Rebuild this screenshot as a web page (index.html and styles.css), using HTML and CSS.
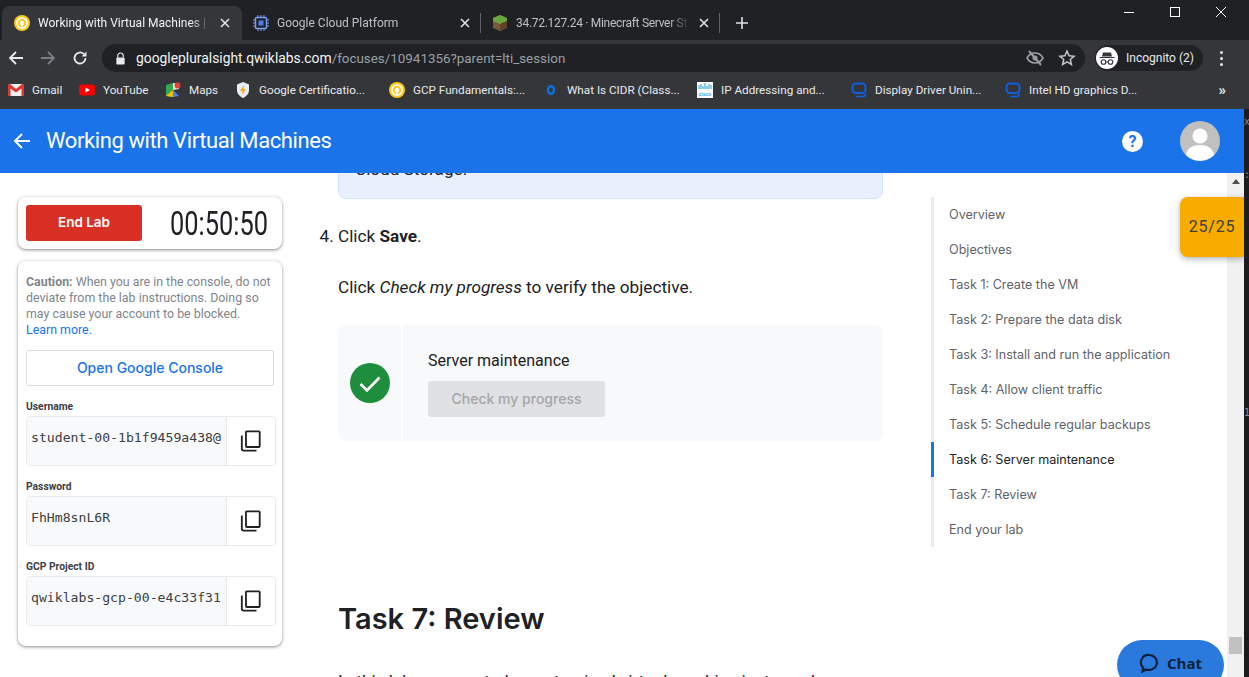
FILE: index.html
```html
<!DOCTYPE html>
<html lang="en">

<head>
  <meta charset="UTF-8">
  <meta name="viewport" content="width=device-width, initial-scale=1.0">
  <title>Working with Virtual Machines</title>
  <link rel="stylesheet" href="styles.css">
</head>

<body>
  <svg class="defs" width="0" height="0" aria-hidden="true">
    <symbol id="i-qwik" viewBox="0 0 16 16">
      <circle cx="8" cy="8" r="8" fill="#fbc91f" />
      <circle cx="8" cy="8" r="5.100" fill="none" stroke="#fff" stroke-width="1.500" />
      <circle cx="8" cy="8" r="2.200" fill="#fff" />
      <rect x="7.200" y="8" width="1.600" height="6" fill="#fff" />
    </symbol>
    <symbol id="i-close" viewBox="0 0 10 10">
      <path d="M1 1l8 8M9 1l-8 8" stroke="currentColor" stroke-width="1.6" fill="none" />
    </symbol>
    <symbol id="i-display" viewBox="0 0 16 16">
      <rect x="1.500" y="1.500" width="13" height="9.500" rx="3.500" fill="none" stroke="#0f5fe0" stroke-width="2" />
      <path d="M5 14.500h6.500c1.500 0 3-1.200 3-3" fill="none" stroke="#0f5fe0" stroke-width="1.700" />
    </symbol>
    <symbol id="i-copy" viewBox="0 0 24 24">
      <rect x="6.500" y="1.500" width="15" height="17" rx="1" fill="none" stroke="#202124" stroke-width="2" />
      <path d="M2 6v14.500a2 2 0 0 0 2 2h14" fill="none" stroke="#202124" stroke-width="2" />
    </symbol>
  </svg>

  <div class="page">
    <div class="tabstrip">
      <div class="tab tab-active">
        <svg class="fav"><use href="#i-qwik" /></svg>
        <span class="tab-title">Working with Virtual Machines | Q</span>
        <svg class="tab-x"><use href="#i-close" /></svg>
      </div>
      <div class="tab">
        <svg class="fav" viewBox="0 0 16 16">
          <rect x="2.500" y="2.500" width="11" height="11" rx="1" fill="#202124" stroke="#7c9cf2" stroke-width="1.500" />
          <rect x="5.500" y="5.500" width="5" height="5" fill="#4b7cf0" />
          <path d="M5 0v2.500M8 0v2.500M11 0v2.500M5 13.500V16M8 13.500V16M11 13.500V16M0 5h2.500M0 8h2.500M0 11h2.500M13.500 5H16M13.500 8H16M13.500 11H16" stroke="#7c9cf2" />
        </svg>
        <span class="tab-title">Google Cloud Platform</span>
        <svg class="tab-x"><use href="#i-close" /></svg>
      </div>
      <div class="tab-sep"></div>
      <div class="tab">
        <svg class="fav" viewBox="0 0 16 16">
          <path d="M8 0l7 3v10l-7 3-7-3V3z" fill="#7b5a3a" />
          <path d="M8 0l7 3v3l-7 3-7-3V3z" fill="#6aa83f" />
          <path d="M8 9v7l7-3V6z" fill="#5e4329" />
        </svg>
        <span class="tab-title tab-title-tight">34.72.127.24 · Minecraft Server St</span>
        <svg class="tab-x"><use href="#i-close" /></svg>
      </div>
      <div class="tab-sep"></div>
      <svg class="tab-plus" viewBox="0 0 12 12"><path d="M6 0v12M0 6h12" stroke="#dee1e6" stroke-width="1.600" /></svg>
      <div class="win-controls">
        <svg viewBox="0 0 12 12"><path d="M1 6.500h10" stroke="#fff" /></svg>
        <svg viewBox="0 0 12 12"><rect x="1.500" y="1.500" width="9" height="9" fill="none" stroke="#fff" /></svg>
        <svg viewBox="0 0 12 12"><path d="M1 1l10 10M11 1L1 11" stroke="#fff" /></svg>
      </div>
    </div>

    <div class="toolbar">
      <svg class="nav-ico" viewBox="0 0 16 16"><path d="M15 8H2M8 2L2 8l6 6" fill="none" stroke="#e8eaed" stroke-width="1.800" /></svg>
      <svg class="nav-ico" viewBox="0 0 16 16"><path d="M1 8h13M8 2l6 6-6 6" fill="none" stroke="#7b7e83" stroke-width="1.800" /></svg>
      <svg class="nav-ico" viewBox="0 0 16 16"><path d="M13.500 8a5.500 5.500 0 1 1-1.600-3.900" fill="none" stroke="#e8eaed" stroke-width="1.800" /><path d="M14.500 1.500v5h-5z" fill="#e8eaed" /></svg>
      <div class="omnibox">
        <svg class="lock" viewBox="0 0 12 14"><path d="M3 6V4a3 3 0 0 1 6 0v2" fill="none" stroke="#e8eaed" stroke-width="1.300" /><rect x="1.500" y="6" width="9" height="7.500" rx="1" fill="#e8eaed" /></svg>
        <span class="url"><b>googlepluralsight.qwiklabs.com</b>/focuses/10941356?parent=lti_session</span>
        <svg class="omni-ico" viewBox="0 0 18 18">
          <path d="M1 9c2-3.500 4.800-5 8-5s6 1.500 8 5c-2 3.500-4.800 5-8 5s-6-1.500-8-5z" fill="none" stroke="#9aa0a6" stroke-width="1.600" />
          <circle cx="9" cy="9" r="2.500" fill="#9aa0a6" />
          <path d="M3 2l12 14" stroke="#9aa0a6" stroke-width="2" />
        </svg>
        <svg class="omni-ico star" viewBox="0 0 18 18"><path d="M9 2l2.100 4.700 5 .5-3.800 3.300 1.100 5L9 12.900l-4.400 2.600 1.100-5L1.900 7.200l5-.5z" fill="none" stroke="#c4c7cb" stroke-width="1.500" /></svg>
      </div>
      <div class="profile">
        <svg class="incog" viewBox="0 0 22 22">
          <circle cx="11" cy="11" r="11" fill="#fff" />
          <path d="M7 5.500h8l1 4H6zM3.500 10h15v1h-15z" fill="#35363a" />
          <circle cx="7.500" cy="15" r="2.300" fill="none" stroke="#35363a" stroke-width="1.100" />
          <circle cx="14.500" cy="15" r="2.300" fill="none" stroke="#35363a" stroke-width="1.100" />
          <path d="M9.800 15h2.400" stroke="#35363a" />
        </svg>
        <span>Incognito (2)</span>
      </div>
      <div class="kebab"><i></i><i></i><i></i></div>
    </div>

    <div class="bookmarks">
      <a class="bm bm-gmail">
        <svg viewBox="0 0 16 16"><rect y="2" width="16" height="12" fill="#f1f1f1" /><path d="M0 2h2l6 5 6-5h2v12h-2.500V6.500L8 10.500 2.500 6.500V14H0z" fill="#d9392f" /></svg>
        Gmail
      </a>
      <a class="bm bm-youtube">
        <svg viewBox="0 0 16 16"><rect y="2.500" width="16" height="11" rx="3" fill="#f00" /><path d="M6.500 5.500l4.500 2.500-4.500 2.500z" fill="#fff" /></svg>
        YouTube
      </a>
      <a class="bm bm-maps">
        <svg viewBox="0 0 16 16"><path d="M1 3l7-2v14l-7-1z" fill="#34a853" /><path d="M8 8l6 6-6 1z" fill="#4285f4" /><path d="M1 14l7-6v7z" fill="#fbbc04" /><path d="M8 1l6 1v5L8 8z" fill="#e8eaed" /><circle cx="12.500" cy="3.500" r="3" fill="#ea4335" /></svg>
        Maps
      </a>
      <a class="bm">
        <svg viewBox="0 0 16 16"><path d="M8 0l6 2.500V8c0 4-3 6.500-6 8-3-1.500-6-4-6-8V2.500z" fill="#e8eef5" /><path d="M9 3L5 9h2.500L7 13l4-6H8.500z" fill="#f5a623" /></svg>
        Google Certificatio...
      </a>
      <a class="bm">
        <svg><use href="#i-qwik" /></svg>
        GCP Fundamentals:...
      </a>
      <a class="bm">
        <svg viewBox="0 0 16 16"><ellipse cx="8" cy="8" rx="3" ry="4" fill="none" stroke="#0a6fe0" stroke-width="2.500" /></svg>
        What Is CIDR (Class...
      </a>
      <a class="bm">
        <svg viewBox="0 0 16 16"><rect width="16" height="16" fill="#fff" /><path d="M2 3v4M4 2v5M6 4v3M8 1v6M10 4v3M12 2v5M14 3v4" stroke="#1ba0d7" /><text x="8" y="13.500" class="cisco-word">cisco</text></svg>
        IP Addressing and...
      </a>
      <a class="bm">
        <svg><use href="#i-display" /></svg>
        Display Driver Unin...
      </a>
      <a class="bm">
        <svg><use href="#i-display" /></svg>
        Intel HD graphics D...
      </a>
      <span class="bm-more">»</span>
    </div>

    <div class="window-row">
      <div class="site">
        <header class="lab-header">
          <svg class="back" viewBox="0 0 18 18"><path d="M17 9H2M9 2L2 9l7 7" fill="none" stroke="#fff" stroke-width="2" /></svg>
          <h1>Working with Virtual Machines</h1>
          <div class="help">?</div>
          <svg class="avatar" viewBox="0 0 40 40">
            <circle cx="20" cy="20" r="20" fill="#c0c0c0" />
            <circle cx="20" cy="15" r="7.500" fill="#fff" />
            <path d="M6 34c1-7 7-10 14-10s13 3 14 10a20 20 0 0 1-28 0z" fill="#fff" />
          </svg>
        </header>

        <main class="lab-body">
          <aside class="sidebar">
            <div class="card timer-card">
              <button class="end-lab">End Lab</button>
              <span class="timer">00:50:50</span>
            </div>
            <div class="card creds">
              <p class="caution"><b>Caution:</b> When you are in the console, do not deviate from the lab instructions. Doing so may cause your account to be blocked. <a>Learn more.</a></p>
              <button class="open-console">Open Google Console</button>
              <label class="cred-label">Username</label>
              <div class="cred-field">
                <span class="cred-value">student-00-1b1f9459a438@</span>
                <span class="cred-copy"><svg><use href="#i-copy" /></svg></span>
              </div>
              <label class="cred-label">Password</label>
              <div class="cred-field">
                <span class="cred-value">FhHm8snL6R</span>
                <span class="cred-copy"><svg><use href="#i-copy" /></svg></span>
              </div>
              <label class="cred-label">GCP Project ID</label>
              <div class="cred-field">
                <span class="cred-value">qwiklabs-gcp-00-e4c33f31</span>
                <span class="cred-copy"><svg><use href="#i-copy" /></svg></span>
              </div>
            </div>
          </aside>

          <article class="content">
            <div class="callout">Cloud Storage.</div>
            <ol class="steps" start="4">
              <li>Click <b>Save</b>.</li>
            </ol>
            <p class="verify">Click <em>Check my progress</em> to verify the objective.</p>
            <div class="progress-card">
              <div class="progress-state">
                <svg viewBox="0 0 40 40">
                  <circle cx="20" cy="20" r="20" fill="#1e8e3e" />
                  <path d="M10.500 21l6.500 6.500 12.500-13" fill="none" stroke="#fff" stroke-width="2.600" />
                </svg>
              </div>
              <div class="progress-main">
                <div class="progress-title">Server maintenance</div>
                <button class="check-btn">Check my progress</button>
              </div>
            </div>
            <h2>Task 7: Review</h2>
            <p class="review-text">In this lab, you created a customized virtual machine instance by</p>
          </article>

          <nav class="toc">
            <a>Overview</a>
            <a>Objectives</a>
            <a>Task 1: Create the VM</a>
            <a>Task 2: Prepare the data disk</a>
            <a>Task 3: Install and run the application</a>
            <a>Task 4: Allow client traffic</a>
            <a>Task 5: Schedule regular backups</a>
            <a class="toc-active">Task 6: Server maintenance</a>
            <a>Task 7: Review</a>
            <a>End your lab</a>
          </nav>

          <div class="scrollbar">
            <span class="scroll-up"></span>
            <span class="scroll-thumb"></span>
          </div>

          <div class="score">25/25</div>
          <div class="chat">
            <svg viewBox="0 0 20 20"><path d="M10 2a8 7.500 0 0 1 0 15c-1 0-2-.1-3-.5L3.500 18.500l.7-3.700A7.500 7.500 0 0 1 10 2z" fill="none" stroke="#0d2036" stroke-width="2.200" /></svg>
            Chat
          </div>
        </main>
      </div>

      <div class="next-window">
        <span class="frag-x">x</span>
        <span class="frag-colon">:</span>
        <span class="frag-one">1</span>
      </div>
    </div>
  </div>
</body>

</html>
```

FILE: styles.css
```css
* {
  margin: 0;
  padding: 0;
  box-sizing: border-box;
}

body {
  font-family: Roboto, sans-serif;
  background: #202124;
  overflow: hidden;
}

.defs {
  position: absolute;
}

.page {
  display: flex;
  flex-direction: column;
  width: 1249px;
  height: 677px;
  overflow: hidden;
}

/* browser chrome */
.tabstrip {
  display: flex;
  align-items: flex-end;
  height: 40px;
  padding-left: 2px;
  background: #202124;
}

.tab {
  display: flex;
  align-items: center;
  width: 238px;
  height: 34px;
  padding-left: 11px;
  padding-right: 10px;
  color: #bdc1c6;
  font-size: 12px;
}

.tab-active {
  width: 240px;
  padding-left: 12px;
  padding-right: 12px;
  border-radius: 8px 8px 0 0;
  background: #35363a;
  color: #f1f3f4;
}

.fav {
  flex: none;
  width: 16px;
  height: 16px;
  margin-right: 8px;
}

.tab-title {
  flex: 1;
  overflow: hidden;
  white-space: nowrap;
  -webkit-mask-image: linear-gradient(to right, #000 88%, transparent 100%);
  mask-image: linear-gradient(to right, #000 88%, transparent 100%);
}

.tab-title-tight {
  letter-spacing: -0.3px;
}

.tab-x {
  flex: none;
  width: 10px;
  height: 10px;
  margin-left: 9px;
  color: #dee1e6;
}

.tab-sep {
  width: 1px;
  height: 20px;
  margin-bottom: 7px;
  background: #5f6368;
}

.tab-plus {
  width: 12px;
  height: 12px;
  margin-left: 16px;
  margin-bottom: 11px;
}

.win-controls {
  display: flex;
  gap: 34px;
  align-self: flex-start;
  margin-left: auto;
  margin-right: 22px;
  padding-top: 6px;
}

.win-controls svg {
  width: 12px;
  height: 12px;
}

.toolbar {
  display: flex;
  align-items: center;
  height: 32px;
  padding-top: 4px;
  padding-left: 8px;
  background: #35363a;
}

.nav-ico {
  width: 16px;
  height: 16px;
  margin-right: 16px;
}

.omnibox {
  display: flex;
  align-items: center;
  width: 983px;
  height: 28px;
  margin-left: -2px;
  padding-left: 13px;
  border-radius: 14px;
  background: #202124;
}

.lock {
  width: 11px;
  height: 13px;
  margin-right: 10px;
}

.url {
  flex: 1;
  color: #9aa0a6;
  font-size: 13.400px;
}

.url b {
  color: #f1f3f4;
  font-size: 13.850px;
  font-weight: 400;
}

.omni-ico {
  width: 18px;
  height: 18px;
  margin-right: 14px;
}

.omni-ico.star {
  margin-right: 9px;
}

.profile {
  display: flex;
  align-items: center;
  gap: 8px;
  width: 108px;
  height: 26px;
  margin-left: 10px;
  padding-left: 1px;
  border-radius: 13px;
  background: #202124;
  color: #e8eaed;
  font-size: 12px;
}

.incog {
  width: 22px;
  height: 22px;
}

.kebab {
  display: flex;
  flex-direction: column;
  gap: 3px;
  margin-left: 17px;
}

.kebab i {
  width: 3px;
  height: 3px;
  border-radius: 50%;
  background: #e8eaed;
}

.bookmarks {
  display: flex;
  align-items: center;
  height: 37px;
  padding-left: 8px;
  border-bottom: 1px solid #35363a;
  background: #35363a;
  color: #e8eaed;
  font-size: 11.700px;
}

.bm {
  flex: none;
  display: flex;
  align-items: center;
  gap: 8px;
  width: 154px;
  white-space: nowrap;
}

.bm-gmail {
  width: 71px;
}

.bm-youtube {
  width: 86px;
}

.bm-maps {
  width: 70px;
}

.bm svg {
  flex: none;
  width: 16px;
  height: 16px;
}

.cisco-word {
  fill: #1ba0d7;
  font-family: "Liberation Sans", sans-serif;
  font-size: 5px;
  font-weight: 700;
  text-anchor: middle;
}

.bm-more {
  margin-left: auto;
  margin-right: 23px;
  font-size: 15px;
  font-weight: 700;
}

.window-row {
  flex: 1;
  display: flex;
  min-height: 0;
}

.next-window {
  flex: none;
  display: flex;
  flex-direction: column;
  width: 5px;
  overflow: hidden;
  background: #1c1c1e;
  color: #8a8d91;
  font-family: "DejaVu Sans Mono", monospace;
  font-size: 10px;
  line-height: 12px;
}

.frag-x {
  margin-top: 7px;
}

.frag-colon {
  margin-top: 41px;
}

.frag-one {
  margin-top: 226px;
}

/* qwiklabs page */
.site {
  flex: none;
  display: flex;
  flex-direction: column;
  width: 1244px;
  background: #fff;
}

.lab-header {
  flex: none;
  display: flex;
  align-items: center;
  height: 64px;
  padding-left: 13px;
  background: #1a73e8;
  color: #fff;
}

.back {
  width: 18px;
  height: 18px;
  margin-right: 15px;
}

.lab-header h1 {
  flex: 1;
  padding-bottom: 2px;
  font-size: 22px;
  font-weight: 400;
  letter-spacing: -0.4px;
}

.help {
  width: 21px;
  height: 21px;
  margin-right: 37px;
  border-radius: 50%;
  background: #fff;
  color: #1a73e8;
  font-size: 16px;
  font-weight: 700;
  line-height: 21px;
  text-align: center;
}

.avatar {
  width: 40px;
  height: 40px;
  margin-right: 24px;
}

.lab-body {
  position: relative;
  flex: 1;
  display: flex;
  min-height: 0;
  overflow: hidden;
}

.sidebar {
  flex: none;
  width: 338px;
  padding: 24px 56px 0 18px;
}

.card {
  border-radius: 8px;
  background: #fff;
  box-shadow: 0 1px 3px rgba(60, 64, 67, 0.5), 0 1px 4px rgba(60, 64, 67, 0.15);
}

.timer-card {
  display: flex;
  align-items: center;
  height: 52px;
  padding-left: 8px;
}

.end-lab {
  flex: none;
  width: 116px;
  height: 36px;
  padding-bottom: 2px;
  border: 0;
  border-radius: 3px;
  background: #d93025;
  color: #fff;
  font-family: Inter, sans-serif;
  font-size: 13.500px;
  font-weight: 600;
}

.timer {
  flex: none;
  display: inline-block;
  width: 96px;
  margin-left: 28px;
  color: #202124;
  font-size: 33px;
  white-space: nowrap;
  transform: scaleX(0.77);
  transform-origin: left center;
}

.creds {
  height: 385px;
  margin-top: 12px;
  padding: 13px 6px 0 8px;
}

.caution {
  color: #80868b;
  font-size: 12.400px;
  line-height: 16px;
}

.caution a {
  display: block;
  color: #1a73e8;
}

.open-console {
  display: block;
  width: 248px;
  height: 36px;
  margin-top: 12px;
  margin-bottom: 15px;
  padding-bottom: 2px;
  border: 1px solid #dadce0;
  border-radius: 3px;
  background: #fff;
  color: #1a73e8;
  font-family: Inter, sans-serif;
  font-size: 14px;
  font-weight: 500;
}

.cred-label {
  display: block;
  height: 15px;
  color: #3c4043;
  font-size: 10.300px;
  font-weight: 700;
  line-height: 12px;
}

.cred-field {
  display: flex;
  height: 50px;
  margin-bottom: 15px;
  border: 1px solid #e8eaed;
  border-radius: 4px;
  overflow: hidden;
}

.cred-value {
  flex: 1;
  min-width: 0;
  padding: 13px 0 0 4px;
  background: #f8f9fa;
  color: #3c4043;
  font-family: "DejaVu Sans Mono", monospace;
  font-size: 13.150px;
  white-space: nowrap;
}

.cred-copy {
  flex: none;
  display: flex;
  align-items: center;
  justify-content: center;
  width: 49px;
  border-left: 1px solid #e8eaed;
}

.cred-copy svg {
  width: 22px;
  height: 24px;
}

.content {
  flex: none;
  width: 545px;
  color: #202124;
  font-size: 17.200px;
}

.callout {
  height: 56px;
  margin-top: -30px;
  padding: 15px 16px 0;
  border: 1px solid #d2e3fc;
  border-radius: 8px;
  background: #e8f0fe;
  line-height: 20px;
}

.steps {
  margin-top: 27px;
  list-style-position: outside;
}

.steps li {
  line-height: 20px;
}

.verify {
  margin-top: 31px;
  line-height: 20px;
}

.progress-card {
  display: flex;
  height: 116px;
  margin-top: 28px;
  border-radius: 8px;
  background: #f8f9fa;
  font-size: 16px;
}

.progress-state {
  display: flex;
  align-items: center;
  width: 65px;
  padding-left: 12px;
  border-right: 2px solid #fff;
}

.progress-state svg {
  width: 40px;
  height: 40px;
}

.progress-main {
  padding: 26px 0 0 25px;
}

.progress-title {
  line-height: 20px;
}

.check-btn {
  display: block;
  width: 177px;
  height: 36px;
  margin-top: 10px;
  padding-bottom: 2px;
  border: 0;
  border-radius: 3px;
  background: #e0e1e3;
  color: #a4a6a9;
  font-family: Inter, sans-serif;
  font-size: 14px;
  font-weight: 500;
}

.content h2 {
  margin-top: 158px;
  font-family: Inter, sans-serif;
  font-size: 29px;
  font-weight: 600;
  line-height: 40px;
}

.review-text {
  margin-top: 30px;
  line-height: 24px;
  white-space: nowrap;
}

.toc {
  flex: none;
  display: flex;
  flex-direction: column;
  align-self: flex-start;
  width: 296px;
  margin-top: 24px;
  margin-left: 48px;
  border-left: 3px solid #e8eaed;
}

.toc a {
  height: 35px;
  margin-left: -3px;
  padding-left: 15px;
  border-left: 3px solid transparent;
  color: #5f6368;
  font-family: Inter, sans-serif;
  font-size: 12.600px;
  line-height: 35px;
  white-space: nowrap;
}

.toc a.toc-active {
  border-left-color: #1a73e8;
  color: #202124;
}

.scrollbar {
  position: relative;
  flex: none;
  width: 17px;
  background: #f1f1f1;
}

.scroll-up {
  position: absolute;
  top: 6px;
  left: 5px;
  border: 4px solid transparent;
  border-top: 0;
  border-bottom: 5px solid #505050;
}

.scroll-thumb {
  position: absolute;
  top: 464px;
  left: 2px;
  width: 13px;
  height: 17px;
  background: #c1c1c1;
}

.score {
  position: absolute;
  top: 24px;
  right: 0;
  width: 64px;
  height: 60px;
  border-radius: 8px 0 0 8px;
  background: #f9ab00;
  box-shadow: 0 2px 6px rgba(60, 64, 67, 0.4);
  color: #3c4043;
  font-size: 16px;
  letter-spacing: 0.8px;
  line-height: 60px;
  text-align: center;
}

.chat {
  position: absolute;
  top: 467px;
  right: 20px;
  display: flex;
  align-items: center;
  justify-content: center;
  gap: 8px;
  width: 107px;
  height: 50px;
  padding-bottom: 4px;
  border-radius: 25px;
  background: #2a7ade;
  color: #0d2036;
  font-family: "Open Sans", sans-serif;
  font-size: 15px;
  font-weight: 700;
}

.chat svg {
  width: 20px;
  height: 20px;
}
```
